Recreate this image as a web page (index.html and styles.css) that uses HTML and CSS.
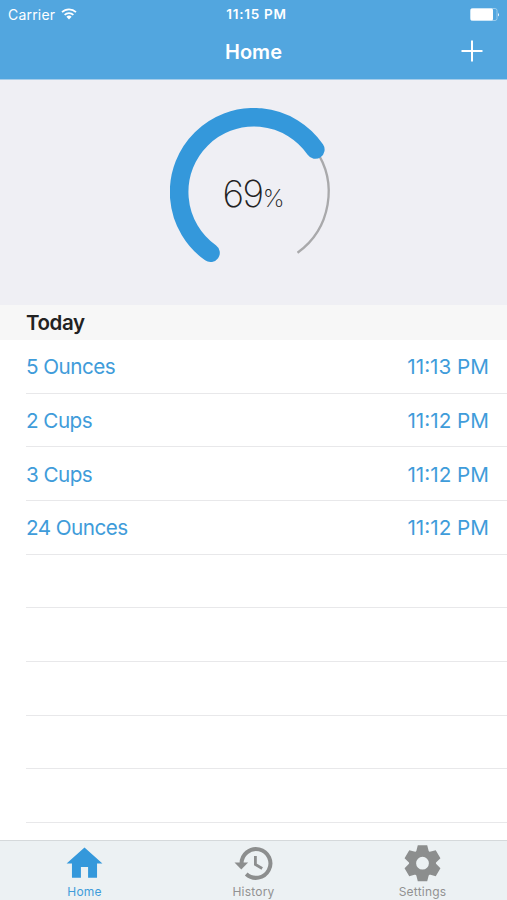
FILE: index.html
```html
<!DOCTYPE html>
<html lang="en">
<head>
<meta charset="utf-8">
<title>Home</title>
<link rel="stylesheet" href="styles.css">
</head>
<body>
<div class="app">
  <header class="top">
    <div class="status">
      <div class="carrier"><span class="carrier-name">Carrier</span>
        <svg class="wifi" viewBox="0 0 16 12" width="16" height="12" fill="none" stroke="#fff" stroke-width="1.7"><path d="M1 4.2a10 10 0 0 1 14 0M3.6 6.9a6.3 6.3 0 0 1 8.800 0"/><path d="M8 11.400 5.400 8.800a3.700 3.700 0 0 1 5.200 0z" fill="#fff" stroke="none"/></svg>
      </div>
      <span class="clock">11:15 PM</span>
      <svg class="battery" viewBox="0 0 30 13" width="30" height="13"><rect x=".5" y=".5" width="26.500" height="12" rx="2" fill="none" stroke="#a9d3ef" stroke-width=".8"/><rect x=".5" y=".5" width="22.500" height="12" rx="1.500" fill="#fff"/><path d="M28 4.500q1.700 2 0 4z" fill="#fff"/></svg>
    </div>
    <div class="nav">
      <h1 class="title">Home</h1>
      <svg class="add" viewBox="0 0 22 22" width="22" height="22" stroke="#fff" stroke-width="2"><path d="M0.500 11h21M11 .5v21"/></svg>
    </div>
  </header>
  <section class="progress">
    <svg class="ring" viewBox="0 0 168 168" width="168" height="168" fill="none">
      <path d="M145.300 41.500A74.700 74.700 0 0 1 127.500 144.800" stroke="#a9a9ab" stroke-width="2.300"/>
      <path d="M40.500 144.800A74.700 74.700 0 1 1 145.300 41.500" stroke="#3498db" stroke-width="18.600" stroke-linecap="round"/>
    </svg>
    <div class="value"><span class="number">69</span><span class="percent">%</span></div>
  </section>
  <h2 class="section-title">Today</h2>
  <main class="list">
    <div class="row"><span class="amount">5 Ounces</span><span class="time">11:13 PM</span></div>
    <div class="row"><span class="amount">2 Cups</span><span class="time">11:12 PM</span></div>
    <div class="row"><span class="amount">3 Cups</span><span class="time">11:12 PM</span></div>
    <div class="row"><span class="amount">24 Ounces</span><span class="time">11:12 PM</span></div>
    <div class="row"></div>
    <div class="row"></div>
    <div class="row"></div>
    <div class="row"></div>
    <div class="row"></div>
  </main>
  <nav class="tabs">
    <div class="tab active">
      <svg class="icon" viewBox="0 0 24 24"><path d="M10 20v-6h4v6h5v-8h3L12 3 2 12h3v8z"/></svg>
      <span class="label">Home</span>
    </div>
    <div class="tab">
      <svg class="icon" viewBox="0 0 43 43"><path class="line" stroke-width="4" d="M9.600 22A14.400 14.400 0 1 1 14.200 32"/><path d="M2.500 20.600h13.600L9.300 27.600z"/><path class="line" stroke-width="2.800" d="M23.400 14v8.400l6.800 4.100"/></svg>
      <span class="label">History</span>
    </div>
    <div class="tab">
      <svg class="icon" viewBox="-21.500 -21.200 43 43">
        <defs><path id="teeth" d="M-4.700-18H4.700L6.500-11h-13zM-4.700 18H4.700L6.500 11h-13z"/></defs>
        <circle class="line" r="9.900" stroke-width="7"/>
        <use href="#teeth"/><use href="#teeth" transform="rotate(60)"/><use href="#teeth" transform="rotate(120)"/>
      </svg>
      <span class="label">Settings</span>
    </div>
  </nav>
</div>
</body>
</html>
```
FILE: styles.css
```css
* { box-sizing: border-box; }
body { margin: 0; background: #fff; font-family: Inter, "Liberation Sans", sans-serif; }
h1, h2 { margin: 0; }
.app { width: 507px; height: 900px; display: flex; flex-direction: column; overflow: hidden; }
.top { height: 80px; flex: none; background: #52a6df; color: #fff; border-bottom: 1px solid #a6cdea; }
.status { height: 27px; display: grid; grid-template-columns: 1fr auto 1fr; align-items: center; padding: 0 7px 0 8px; }
.carrier { display: flex; align-items: center; gap: 6px; font-size: 14px; line-height: 27px; }
.carrier-name { padding-top: 1px; letter-spacing: 0.2px; }
.wifi { margin-top: -1px; }
.clock { margin-left: 5px; font-size: 13.5px; font-weight: 600; letter-spacing: 0.75px; }
.battery { justify-self: end; }
.nav { height: 50px; display: grid; grid-template-columns: 1fr auto 1fr; align-items: center; padding: 0 24px; }
.title { grid-column: 2; padding-top: 1px; font-size: 20px; font-weight: 600; line-height: 49px; }
.add { justify-self: end; margin-top: -2px; }
.progress { height: 225px; flex: none; background: #efeff4; display: grid; place-items: start center; padding-top: 28px; }
.ring { grid-area: 1 / 1; margin-left: 1px; }
.value { grid-area: 1 / 1; margin-top: 63px; line-height: 46px; color: #222; font-weight: 250; display: flex; align-items: baseline; }
.number { font-size: 37px; letter-spacing: -1.4px; }
.percent { font-size: 24.5px; }
.section-title { height: 35px; flex: none; background: #f7f7f7; color: #222; font-size: 20.5px; font-weight: 600; line-height: 36px; padding-left: 26px; letter-spacing: -0.4px; }
.list { flex: 1; min-height: 0; overflow: hidden; padding-left: 26px; }
.row { height: 53.75px; display: flex; justify-content: space-between; align-items: center; padding: 1px 18px 0 0; border-bottom: 1px solid #e8e8ea; margin-top: -0.1px; color: #3f9cda; font-size: 20.7px; }
.amount { letter-spacing: -0.55px; }
.tabs { height: 60px; flex: none; display: grid; grid-template-columns: repeat(3, 1fr); background: #ecf1f3; border-top: 1px solid #d5d9db; color: #929292; }
.tab { display: flex; flex-direction: column; align-items: center; padding-top: 1px; }
.icon { width: 43px; height: 43px; fill: #8c8e8e; flex: none; }
.line { fill: none; stroke: #8c8e8e; }
.label { font-size: 12px; line-height: 14px; letter-spacing: 0.2px; }
.active { color: #3f9cda; }
.active .icon { fill: #3498db; }
```
